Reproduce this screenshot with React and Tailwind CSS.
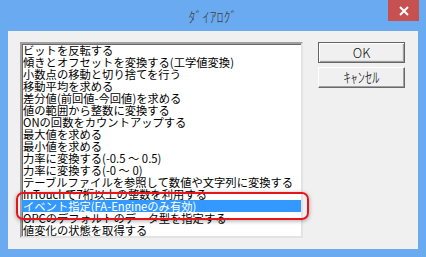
import React from 'react';

const items = [
  'ビットを反転する',
  '傾きとオフセットを変換する(工学値変換)',
  '小数点の移動と切り捨てを行う',
  '移動平均を求める',
  '差分値(前回値-今回値)を求める',
  '値の範囲から整数に変換する',
  'ONの回数をカウントアップする',
  '最大値を求める',
  '最小値を求める',
  '力率に変換する(-0.5 ～ 0.5)',
  '力率に変換する(-0 ～ 0)',
  'テーブルファイルを参照して数値や文字列に変換する',
  'InTouchで7桁以上の整数を利用する',
  'イベント指定(FA-Engineのみ有効)',
  'OPCのデフォルトのデータ型を指定する',
  '値変化の状態を取得する',
];

const selected = 13;

export default function App() {
  return (
    <div
      className="relative w-[426px] h-[257px] bg-[#6aaaf0] flex flex-col overflow-hidden"
      style={{ fontFamily: '"Noto Sans CJK JP", "Liberation Sans", sans-serif' }}
    >
      {/* title bar */}
      <div className="relative h-[31px] flex items-center justify-center shrink-0">
        <span className="text-[14px] leading-none font-light text-[#3c3c3c]">ﾀﾞｲｱﾛｸﾞ</span>
        <button className="absolute right-[7px] top-0 w-[31px] h-[21px] bg-[#c75050] flex items-center justify-center">
          <svg width="10" height="10" viewBox="0 0 10 10">
            <path d="M1 1 L9 9 M9 1 L1 9" stroke="#fff" strokeWidth="2" />
          </svg>
        </button>
      </div>

      {/* client area */}
      <div className="mx-[8px] h-[218px] bg-[#f0f0f0] flex pl-[12px] pt-[11px] gap-[15px]">
        <div className="w-[283px] h-[196px] bg-white border-2 border-t-[#a0a0a0] border-l-[#a0a0a0] border-r-[#e3e3e3] border-b-[#e3e3e3] shadow-[inset_1px_1px_0_#696969] flex flex-col">
          {items.map((t, i) => (
            <div
              key={i}
              className={`h-[12px] pl-[1px] text-[11.3px] leading-[12px] whitespace-nowrap ${
                i === selected ? 'bg-[#3399ff] text-white' : 'text-black'
              }`}
            >
              {t}
            </div>
          ))}
        </div>

        <div className="flex flex-col gap-[4px] w-[87px]">
          <button className="h-[21px] bg-[#f0f0f0] border border-[#646464] shadow-[inset_1px_1px_0_#ffffff,inset_-1px_-1px_0_#a0a0a0,inset_-2px_-2px_0_#e3e3e3] text-[13px] font-light leading-none text-[#111]">
            OK
          </button>
          <button className="h-[21px] bg-[#f0f0f0] border border-t-[#ffffff] border-l-[#ffffff] border-r-[#696969] border-b-[#696969] shadow-[inset_-1px_-1px_0_#a0a0a0] text-[14.5px] font-light leading-none text-[#111]">
            ｷｬﾝｾﾙ
          </button>
        </div>
      </div>

      {/* highlight annotation */}
      <div className="absolute left-[16px] top-[192px] w-[293px] h-[28px] rounded-[7px] border-2 border-[#e8141c] shadow-[0_1px_4px_rgba(0,0,0,0.35)] pointer-events-none" />
    </div>
  );
}
